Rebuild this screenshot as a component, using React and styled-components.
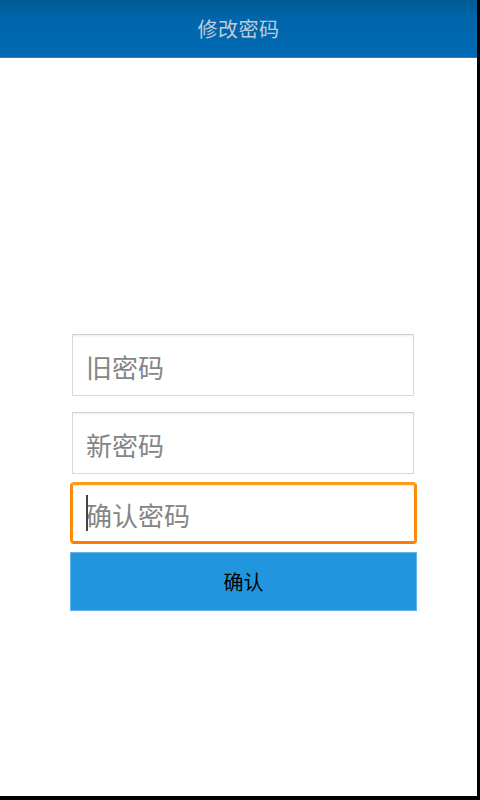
import styled, { createGlobalStyle } from "styled-components";

const GlobalStyle = createGlobalStyle`
html, body {
  margin: 0;
  padding: 0;
  background: #000;
}
* { box-sizing: border-box; }
`

const Screen = styled.div`
width: 477px;
height: 796px;
background: #fff;
display: flex;
flex-direction: column;
font-family: "Noto Sans CJK SC", "Noto Sans", sans-serif;
`

const Header = styled.header`
height: 58px;
flex-shrink: 0;
display: flex;
align-items: center;
justify-content: center;
background: linear-gradient(to bottom, #005c94 0%, #0066ab 35%, #006ab2 100%);
border-bottom: 1px solid #2a82c2;
`

const Title = styled.h1`
margin: 0;
font-size: 20px;
font-weight: 400;
color: #bfcbd8;
letter-spacing: 0.5px;
`

const Form = styled.form`
margin: 276px 0 0 70px;
width: 347px;
display: flex;
flex-direction: column;
`

const Field = styled.div`
position: relative;
margin: ${({$mt}) => $mt}px 3px 0 2px;
height: 62px;
border: 1px solid #d8d8d8;
border-top-color: #cfcfcf;
box-shadow: inset 0 3px 3px -2px rgba(0,0,0,0.08);
background: #fff;

${({$focused}) => $focused && `
  margin: 8px 0 0 0;
  border: 3px solid #ff8a0c;
  border-top-color: #ff9a1e;
  border-bottom-color: #ff7a00;
  border-radius: 4px;
`}
`

const Input = styled.input`
width: 100%;
height: 100%;
border: none;
outline: none;
background: transparent;
padding: 2px 0 0 13px;
font-family: inherit;
font-size: 26px;
color: #333;
caret-color: transparent;

&::placeholder {
  color: #858585;
}
`

const Caret = styled.span`
position: absolute;
left: 13px;
top: 10px;
width: 2px;
height: 36px;
background: #444;
`

const Submit = styled.button`
margin-top: 8px;
height: 59px;
border: 1px solid #62b4ee;
background: #2196de;
color: #000;
font-family: inherit;
font-size: 20px;
padding: 0;
cursor: pointer;
`

export default function App(){
    return(
        <>
            <GlobalStyle />
            <Screen>
                <Header>
                    <Title>修改密码</Title>
                </Header>
                <Form onSubmit={(e)=>e.preventDefault()}>
                    <Field $mt={0}>
                        <Input type="password" placeholder="旧密码" />
                    </Field>
                    <Field $mt={16}>
                        <Input type="password" placeholder="新密码" />
                    </Field>
                    <Field $focused>
                        <Input type="password" placeholder="确认密码" />
                        <Caret />
                    </Field>
                    <Submit type="submit">确认</Submit>
                </Form>
            </Screen>
        </>
    )
}
